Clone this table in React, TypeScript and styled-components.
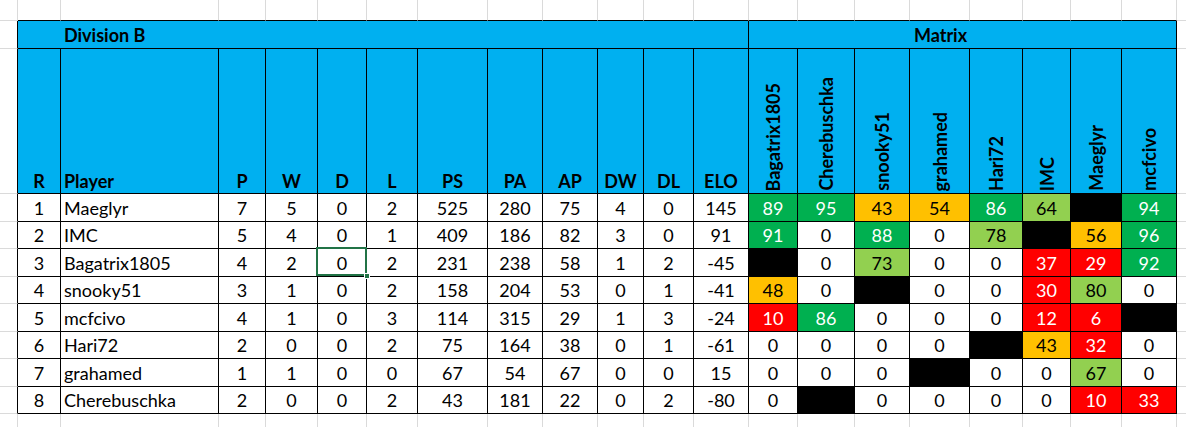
import React from 'react';
import styled, { createGlobalStyle, css } from 'styled-components';

type Line = 'ink' | 'grid' | 'none';

const INK = '#000';
const GRID = '#dadada';
const BLUE = '#00b0f0';
const SELECT = '#217346';

const FILLS: Record<string, string> = {
  G: '#00b050',
  L: '#92d050',
  O: '#ffc000',
  R: '#ff0000',
  X: '#000000',
};
const LIGHT_TEXT = ['G', 'R'];

const COLS = [43, 158, 47, 52, 49, 51, 70, 55, 55, 46, 50, 55, 49, 57, 55, 60, 53, 48, 51, 55];
const ROWS = [28, 27, 28, 27, 28, 27, 28, 27];

const statHeads = ['R', 'Player', 'P', 'W', 'D', 'L', 'PS', 'PA', 'AP', 'DW', 'DL', 'ELO'];
const opponents = ['Bagatrix1805', 'Cherebuschka', 'snooky51', 'grahamed', 'Hari72', 'IMC', 'Maeglyr', 'mcfcivo'];

const players = [
  { rank: 1, name: 'Maeglyr', stats: [7, 5, 0, 2, 525, 280, 75, 4, 0, 145], matrix: ['G89', 'G95', 'O43', 'O54', 'G86', 'L64', 'X', 'G94'] },
  { rank: 2, name: 'IMC', stats: [5, 4, 0, 1, 409, 186, 82, 3, 0, 91], matrix: ['G91', '0', 'G88', '0', 'L78', 'X', 'O56', 'G96'] },
  { rank: 3, name: 'Bagatrix1805', stats: [4, 2, 0, 2, 231, 238, 58, 1, 2, -45], matrix: ['X', '0', 'L73', '0', '0', 'R37', 'R29', 'G92'] },
  { rank: 4, name: 'snooky51', stats: [3, 1, 0, 2, 158, 204, 53, 0, 1, -41], matrix: ['O48', '0', 'X', '0', '0', 'R30', 'L80', '0'] },
  { rank: 5, name: 'mcfcivo', stats: [4, 1, 0, 3, 114, 315, 29, 1, 3, -24], matrix: ['R10', 'G86', '0', '0', '0', 'R12', 'R6', 'X'] },
  { rank: 6, name: 'Hari72', stats: [2, 0, 0, 2, 75, 164, 38, 0, 1, -61], matrix: ['0', '0', '0', '0', 'X', 'O43', 'R32', '0'] },
  { rank: 7, name: 'grahamed', stats: [1, 1, 0, 0, 67, 54, 67, 0, 0, 15], matrix: ['0', '0', '0', 'X', '0', '0', 'L67', '0'] },
  { rank: 8, name: 'Cherebuschka', stats: [2, 0, 0, 2, 43, 181, 22, 0, 2, -80], matrix: ['0', 'X', '0', '0', '0', '0', 'R10', 'R33'] },
];

const line = (kind: Line = 'none') =>
  kind === 'ink' ? `1px solid ${INK}` : kind === 'grid' ? `1px solid ${GRID}` : 'none';

const GlobalStyle = createGlobalStyle`
  *, *::before, *::after { box-sizing: border-box; }
  html, body { margin: 0; padding: 0; background: #fff; }
  body {
    font-family: Lato, "Open Sans", "Liberation Sans", sans-serif;
    font-size: 18px;
    color: ${INK};
  }
`;

const Sheet = styled.div`
  display: grid;
  grid-template-columns: 18px ${COLS.map(w => `${w}px`).join(' ')} 1fr;
  grid-template-rows: 21px 28px 145px ${ROWS.map(h => `${h}px`).join(' ')} 1fr;
  width: 1186px;
  height: 427px;
  overflow: hidden;
`;

const Blank = styled.div<{ $right?: Line; $bottom?: Line }>`
  border-right: ${p => line(p.$right)};
  border-bottom: ${p => line(p.$bottom)};
`;

const Banner = styled.div<{ $span: number; $centered?: boolean }>`
  grid-column: span ${p => p.$span};
  display: flex;
  align-items: flex-end;
  justify-content: ${p => (p.$centered ? 'center' : 'flex-start')};
  padding: ${p => (p.$centered ? '0 44px 2px 0' : '0 0 2px 46px')};
  background: ${BLUE};
  border-right: 1px solid ${INK};
  border-bottom: 1px solid ${INK};
  font-weight: 700;
  white-space: nowrap;
`;

const Head = styled.div<{ $left?: boolean }>`
  display: flex;
  align-items: flex-end;
  justify-content: ${p => (p.$left ? 'flex-start' : 'center')};
  padding: 0 3px 1px;
  background: ${BLUE};
  border-right: 1px solid ${INK};
  border-bottom: 1px solid ${INK};
  font-weight: 700;
  white-space: nowrap;
`;

const RotHead = styled(Head)`
  padding-bottom: 2px;
`;

const RotLabel = styled.span`
  writing-mode: vertical-rl;
  transform: rotate(180deg);
  line-height: 20px;
  white-space: nowrap;
`;

const Cell = styled.div<{ $fill?: string; $light?: boolean; $left?: boolean; $selected?: boolean }>`
  position: relative;
  display: flex;
  align-items: flex-end;
  justify-content: ${p => (p.$left ? 'flex-start' : 'center')};
  padding: 0 3px 2px;
  background: ${p => p.$fill ?? '#fff'};
  color: ${p => (p.$light ? '#fff' : INK)};
  border-right: 1px solid ${INK};
  border-bottom: 1px solid ${INK};
  white-space: nowrap;

  ${p =>
    p.$selected &&
    css`
      &::after {
        content: '';
        position: absolute;
        left: -2px;
        top: -2px;
        right: -1px;
        bottom: 0;
        border: 2px solid ${SELECT};
      }
      &::before {
        content: '';
        position: absolute;
        right: -4px;
        bottom: -3px;
        width: 6px;
        height: 6px;
        background: ${SELECT};
        border: 1px solid #fff;
        z-index: 1;
      }
    `}
`;

const MatrixCell: React.FC<{ code: string }> = ({ code }) => {
  const key = /^[A-Z]/.test(code) ? code[0] : '';
  const value = key ? code.slice(1) : code;
  return (
    <Cell $fill={key ? FILLS[key] : undefined} $light={LIGHT_TEXT.includes(key)}>
      {value}
    </Cell>
  );
};

const App: React.FC = () => {
  const tableCols = COLS.length;

  return (
    <>
      <GlobalStyle />
      <Sheet>
        {/* sheet row above the table */}
        <Blank $right="grid" $bottom="grid" />
        {COLS.map((_, i) => (
          <Blank key={`t${i}`} $right="grid" $bottom="ink" />
        ))}
        <Blank $bottom="grid" />

        {/* banner row */}
        <Blank $right="ink" $bottom="grid" />
        <Banner $span={12}>Division B</Banner>
        <Banner $span={8} $centered>
          Matrix
        </Banner>
        <Blank $bottom="grid" />

        {/* column headers */}
        <Blank $right="ink" $bottom="grid" />
        {statHeads.map(h => (
          <Head key={h} $left={h === 'Player'}>
            {h}
          </Head>
        ))}
        {opponents.map(o => (
          <RotHead key={o}>
            <RotLabel>{o}</RotLabel>
          </RotHead>
        ))}
        <Blank $bottom="grid" />

        {/* players */}
        {players.map(p => (
          <React.Fragment key={p.name}>
            <Blank $right="ink" $bottom="grid" />
            <Cell>{p.rank}</Cell>
            <Cell $left>{p.name}</Cell>
            {p.stats.map((s, i) => (
              <Cell key={i} $selected={p.rank === 3 && i === 2}>
                {s}
              </Cell>
            ))}
            {p.matrix.map((m, i) => (
              <MatrixCell key={i} code={m} />
            ))}
            <Blank $bottom="grid" />
          </React.Fragment>
        ))}

        {/* sheet row below the table */}
        <Blank $right="grid" />
        {Array.from({ length: tableCols }, (_, i) => (
          <Blank key={`b${i}`} $right="grid" />
        ))}
        <Blank />
      </Sheet>
    </>
  );
};

export default App;
